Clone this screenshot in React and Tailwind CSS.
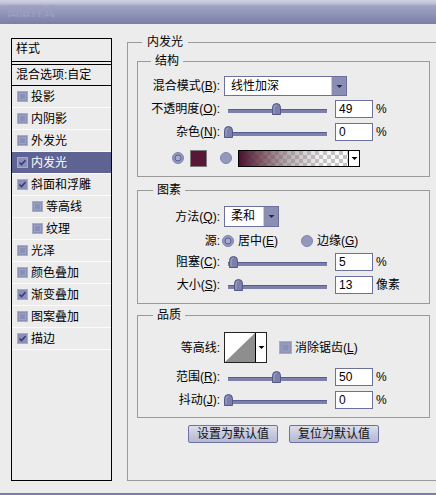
import React from 'react';

const Key = ({ t, k }) => (
  <>
    {t}(<span className="underline">{k}</span>):
  </>
);

const Check = ({ checked, size = 11 }) => (
  <svg width={size} height={size} viewBox="0 0 11 11" className="shrink-0">
    <rect x="0.5" y="0.5" width="10" height="10" fill="#8a8fb5" stroke="#a8accb" />
    {checked ? (
      <path d="M2.5 5.5 L4.5 7.5 L8.5 3.2" stroke="#353a78" strokeWidth="1.6" fill="none" />
    ) : (
      <rect x="2.5" y="2.5" width="6" height="6" fill="none" stroke="#9da2c3" />
    )}
  </svg>
);

const Radio = ({ on }) => (
  <svg width="12" height="12" viewBox="0 0 12 12" className="shrink-0">
    <circle cx="6" cy="6" r="5.5" fill="#9498bd" stroke="#8084ad" />
    {on && <circle cx="6" cy="6" r="3" fill="#a7abc9" stroke="#5a5e8e" />}
  </svg>
);

const Arrow = ({ color = '#23275c' }) => (
  <svg width="7" height="5" viewBox="0 0 7 5">
    <path d="M0.5 1 H6.5 L3.5 4 Z" fill={color} />
  </svg>
);

const Select = ({ value, w }) => (
  <div className={`ml-[4px] flex h-full ${w} shrink-0 border border-[#6c709d] bg-white`}>
    <span className="flex-1 pl-[6px] leading-[18px]">{value}</span>
    <span className="flex w-[15px] items-center justify-center border-l border-[#c9cbe0] bg-[#8a8eb3]">
      <Arrow />
    </span>
  </div>
);

const Slider = ({ pos }) => (
  <div className="relative ml-[4px] flex h-[18px] w-[107px] shrink-0 items-end pb-[5px]">
    <div className="mx-[4px] h-[4px] flex-1 border-t border-[#595d8d] bg-[#7c80aa]" />
    <svg className="absolute top-[3px]" style={{ left: pos }} width="9" height="12" viewBox="0 0 9 12">
      <path d="M0.5 11.5 V4.5 A4 4 0 0 1 8.5 4.5 V11.5 Z" fill="#7b7fa9" stroke="#53578a" />
      <path d="M2 10.5 V4.8 A2.6 2.6 0 0 1 4.5 2.2" fill="none" stroke="#a3a7c8" />
    </svg>
  </div>
);

const Input = ({ value }) => (
  <div className="ml-[4px] h-full w-[38px] shrink-0 border border-[#6c709d] bg-white pl-[3px] leading-[16px]">{value}</div>
);

const SliderRow = ({ label, pos, value, unit, mt }) => (
  <div className={`flex h-[18px] items-center ${mt}`}>
    <div className="w-[82px] text-right">{label}</div>
    <Slider pos={pos} />
    <Input value={value} />
    <span className="ml-[3px]">{unit}</span>
  </div>
);

const Group = ({ title, mt, pb, ml, children }) => (
  <fieldset className={`ml-[9px] w-[293px] border border-[#9a9a9a] ${mt} ${pb}`}>
    <legend className={`${ml} px-[4px] leading-[12px]`}>{title}</legend>
    {children}
  </fieldset>
);

const items = [
  { name: '投影' },
  { name: '内阴影' },
  { name: '外发光' },
  { name: '内发光', checked: true, active: true },
  { name: '斜面和浮雕', checked: true },
  { name: '等高线', sub: true },
  { name: '纹理', sub: true },
  { name: '光泽' },
  { name: '颜色叠加' },
  { name: '渐变叠加', checked: true },
  { name: '图案叠加' },
  { name: '描边', checked: true },
];

export default function App() {
  return (
    <div className="flex h-[495px] w-[436px] flex-col overflow-hidden bg-[#ececec] font-['Liberation_Sans','Noto_Sans_CJK_SC',sans-serif] text-[12px] text-black">
      <div className="h-[24px] shrink-0 bg-[linear-gradient(to_bottom,#d0d1e1_0px,#c3c5da_3px,#a0a3c2_6px,#7b7fa7_24px)] pl-[7px] pt-[6px] text-[12px] font-bold leading-[13px] text-[#9c9ec0]">
        图层样式
      </div>

      <div className="flex flex-1 items-start">
        {/* style list */}
        <div className="ml-[11px] mt-[14px] h-[443px] w-[101px] shrink-0 border border-black">
          <div className="h-[23px] border-b border-black pl-[4px] pt-[3px] leading-[14px]">样式</div>
          <div className="mt-[2px] h-[22px] border-y border-black pl-[4px] leading-[20px]">混合选项:自定</div>
          {items.map((it) => (
            <div
              key={it.name}
              className={`flex h-[22px] items-center gap-[3px] border-b border-[#fbfbfb] ${it.sub ? 'pl-[20px]' : 'pl-[5px]'} ${it.active ? 'bg-[#5e6394] text-white' : ''}`}
            >
              <Check checked={it.checked} />
              <span>{it.name}</span>
            </div>
          ))}
        </div>

        {/* settings */}
        <fieldset className="ml-[15px] mt-[12px] w-[316px] shrink-0 border border-[#9a9a9a] pb-[37px]">
          <legend className="ml-[14px] px-[5px] leading-[12px]">内发光</legend>

          <Group title="结构" mt="mt-[7px]" pb="pb-[9px]" ml="ml-[13px]">
            <div className="mt-[9px] flex h-[20px] items-center">
              <div className="w-[82px] text-right">
                <Key t="混合模式" k="B" />
              </div>
              <Select value="线性加深" w="w-[123px]" />
            </div>
            <SliderRow label={<Key t="不透明度" k="O" />} pos={48} value="49" unit="%" mt="mt-[4px]" />
            <SliderRow label={<Key t="杂色" k="N" />} pos={0} value="0" unit="%" mt="mt-[5px]" />
            <div className="mt-[8px] flex h-[18px] items-center pl-[34px]">
              <Radio on />
              <div className="ml-[6px] h-[17px] w-[17px] border border-[#7c7c7c] bg-[#581639]" />
              <div className="ml-[13px]">
                <Radio />
              </div>
              <div className="ml-[6px] flex h-[17px] w-[122px] border border-black">
                <div className="flex-1 bg-[image:repeating-conic-gradient(#c4c4c4_0_25%,#ffffff_0_50%)] bg-[length:8px_8px]">
                  <div className="h-full w-full bg-[linear-gradient(to_right,#4a1231_0%,#6b3a4acc_22%,#8a7a8299_45%,#c0bcc633_75%,#ffffff00_100%)]" />
                </div>
                <div className="flex w-[11px] items-center justify-center border-l border-black bg-white">
                  <Arrow color="#000" />
                </div>
              </div>
            </div>
          </Group>

          <Group title="图素" mt="mt-[7px]" pb="pb-[9px]" ml="ml-[15px]">
            <div className="mt-[10px] flex h-[21px] items-center">
              <div className="w-[82px] text-right">
                <Key t="方法" k="Q" />
              </div>
              <Select value="柔和" w="w-[55px]" />
            </div>
            <div className="mt-[6px] flex h-[16px] items-center">
              <div className="w-[82px] text-right">源:</div>
              <div className="ml-[2px]">
                <Radio on />
              </div>
              <span className="ml-[4px] w-[63px]">
                居中(<span className="underline">E</span>)
              </span>
              <Radio />
              <span className="ml-[4px]">
                边缘(<span className="underline">G</span>)
              </span>
            </div>
            <SliderRow label={<Key t="阻塞" k="C" />} pos={5} value="5" unit="%" mt="mt-[4px]" />
            <SliderRow label={<Key t="大小" k="S" />} pos={10} value="13" unit="像素" mt="mt-[5px]" />
          </Group>

          <Group title="品质" mt="mt-[5px]" pb="pb-[8px]" ml="ml-[15px]">
            <div className="mt-[11px] flex h-[31px] items-center">
              <div className="w-[82px] text-right">等高线:</div>
              <div className="ml-[4px] flex h-full w-[43px] border border-[#222]">
                <svg width="30" height="29" viewBox="0 0 30 29" className="bg-white">
                  <path d="M0 29 L30 0 V29 Z" fill="#8e8e8e" />
                </svg>
                <div className="flex flex-1 items-center justify-center border-l border-black bg-white">
                  <Arrow color="#000" />
                </div>
              </div>
              <div className="ml-[12px]">
                <Check size={13} />
              </div>
              <span className="ml-[3px]">
                消除锯齿(<span className="underline">L</span>)
              </span>
            </div>
            <SliderRow label={<Key t="范围" k="R" />} pos={48} value="50" unit="%" mt="mt-[5px]" />
            <SliderRow label={<Key t="抖动" k="J" />} pos={0} value="0" unit="%" mt="mt-[5px]" />
          </Group>

          <div className="ml-[60px] mt-[7px] flex gap-[11px]">
            <button className="h-[18px] w-[90px] rounded-[2px] border border-[#6e72a0] bg-[linear-gradient(to_bottom,#dcdeec,#c2c5dc_60%,#b5b9d4)] leading-[16px] text-[#111]">
              设置为默认值
            </button>
            <button className="h-[18px] w-[90px] rounded-[2px] border border-[#6e72a0] bg-[linear-gradient(to_bottom,#dcdeec,#c2c5dc_60%,#b5b9d4)] leading-[16px] text-[#111]">
              复位为默认值
            </button>
          </div>
        </fieldset>
      </div>

      <div className="h-[2px] shrink-0 bg-[#7a7ea6]" />
    </div>
  );
}
